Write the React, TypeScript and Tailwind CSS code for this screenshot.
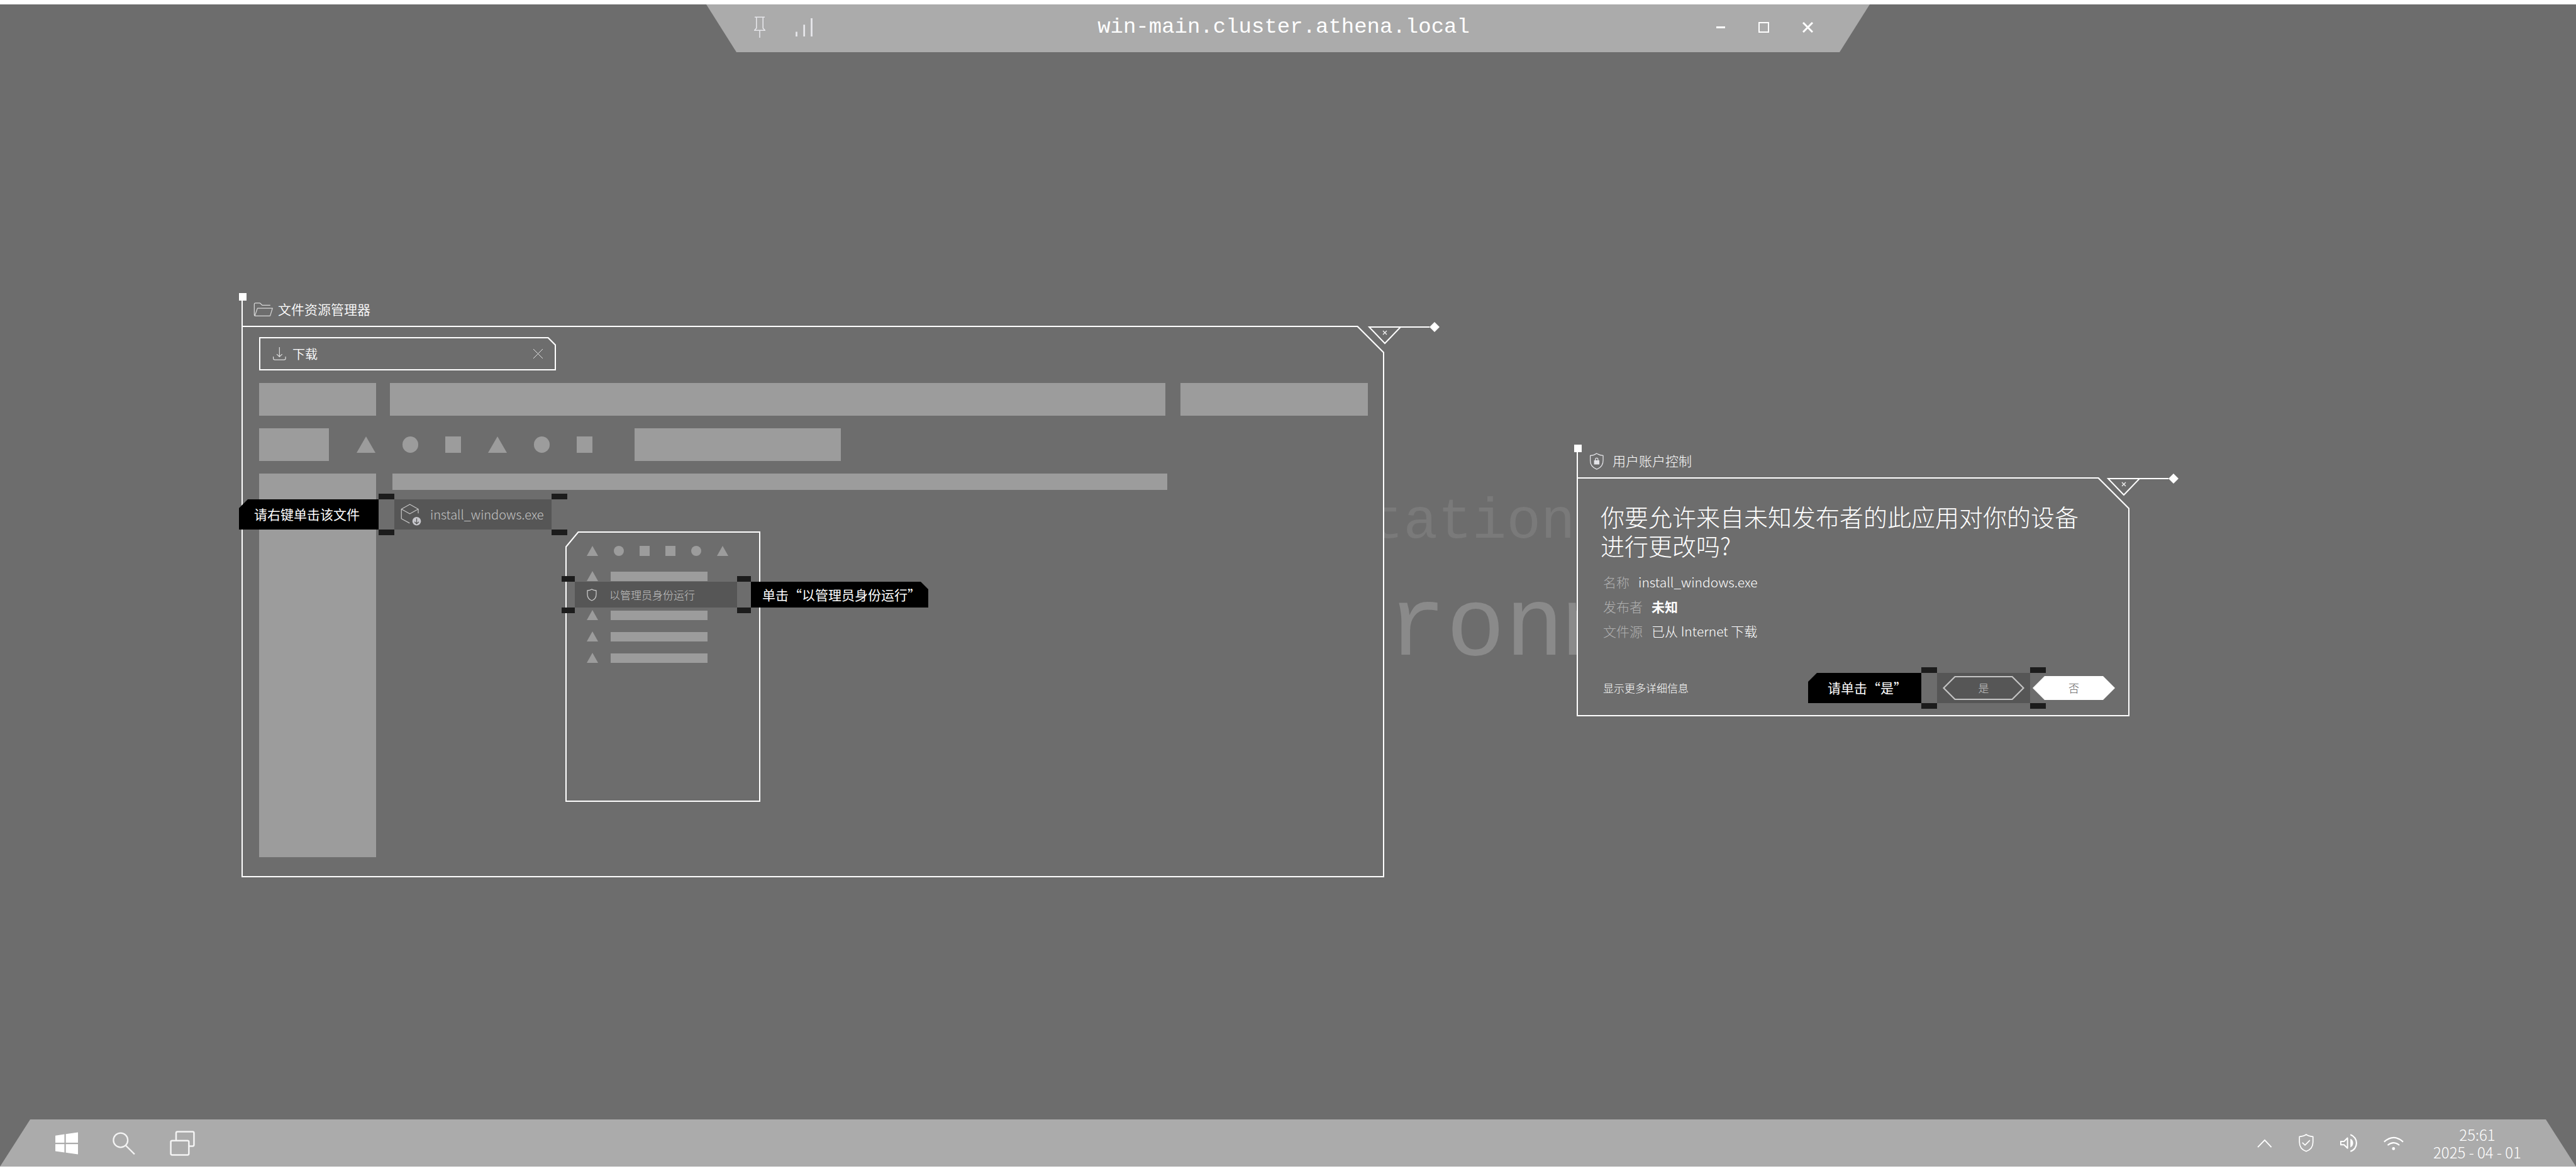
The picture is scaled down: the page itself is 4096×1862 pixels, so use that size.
import React from "react";

type IconProps = { className?: string };

const line = { fill: "none", stroke: "currentColor", strokeLinejoin: "round" as const };

const PinIcon = ({ className }: IconProps) => (
  <svg viewBox="54 88 57 107" className={className} aria-hidden="true" {...line} strokeWidth="5">
    <path d="M57 91.500H108M66 93V147L56 158H109L99 147V93M82.500 158V195" />
  </svg>
);

const SignalIcon = ({ className }: IconProps) => (
  <svg viewBox="271 99 86 93" className={className} aria-hidden="true" fill="currentColor">
    <path d="M271 168h9v24h-9zM310 132h9v60h-9zM348 99h9v93h-9z" />
  </svg>
);

const FolderIcon = ({ className }: IconProps) => (
  <svg viewBox="97 68 98 70" className={className} aria-hidden="true" {...line} strokeWidth="4">
    <path d="M182 82H141L131 72Q130 71 128 71H107Q101 71 101 77V130Q101 136 107 136H178Q181 136 182 133L193 97H117L104 134" />
  </svg>
);

const DownloadIcon = ({ className }: IconProps) => (
  <svg viewBox="198 291 70 70" className={className} aria-hidden="true" {...line} strokeWidth="4">
    <path d="M232.500 291V342M218 328L232.500 342L247 328M200 341V350Q200 358 208 358H257Q265 358 265 350V341" />
  </svg>
);

const CrossIcon = ({ className }: IconProps) => (
  <svg viewBox="0 0 17 17" className={className} aria-hidden="true" {...line}>
    <path d="M1 1L16 16M16 1L1 16" />
  </svg>
);

const PackageIcon = ({ className }: IconProps) => (
  <svg viewBox="853 1101 106 112" className={className} aria-hidden="true">
    <path
      d="M943 1150V1128L900 1104L857 1128V1177L899 1200M857 1128L900 1152L943 1128"
      {...line}
      strokeWidth="4"
    />
    <circle cx="935" cy="1190" r="22" fill="#c6c6cb" />
    <path d="M935 1176V1203M924 1193L935 1203L946 1193" fill="none" stroke="#565656" strokeWidth="4" />
  </svg>
);

const ShieldIcon = ({ className }: IconProps) => (
  <svg viewBox="0 0 16 20" className={className} aria-hidden="true" {...line} strokeWidth="1.300">
    <path d="M8 1C6 2.400 4 2.900 1 3V9C1 14 4 17.500 8 19C12 17.500 15 14 15 9V3C12 2.900 10 2.400 8 1Z" />
  </svg>
);

const ShieldLockIcon = ({ className }: IconProps) => (
  <svg viewBox="108 73 70 86" className={className} aria-hidden="true">
    <path
      d="M142.500 76C132 84 121 86 110 87V112C110 134 123 149 142.500 156C162 149 175 134 175 112V87C164 86 153 84 142.500 76Z"
      {...line}
      strokeWidth="4"
    />
    <path d="M136 112V106Q136 100 142.500 100Q149 100 149 106V112" fill="none" stroke="currentColor" strokeWidth="4" />
    <rect x="129" y="111" width="27" height="21" fill="currentColor" />
  </svg>
);

const ShieldCheckIcon = ({ className }: IconProps) => (
  <svg viewBox="269 108 78 94" className={className} aria-hidden="true" {...line} strokeWidth="5.500">
    <path d="M308 111C297 119 285 121 273 122V150C273 174 288 191 308 198C328 191 343 174 343 150V122C331 121 319 119 308 111Z" />
    <path d="M288 153L302 166L327 141" />
  </svg>
);

const SpeakerIcon = ({ className }: IconProps) => (
  <svg viewBox="480 109 88 94" className={className} aria-hidden="true">
    <path d="M483 148H500L518 130V183L500 165H483Z" {...line} strokeWidth="6.500" />
    <path d="M533 134Q547 140 547 156Q547 172 533 179Z" fill="currentColor" />
    <path d="M533 113C575 126 575 187 533 199" fill="none" stroke="currentColor" strokeWidth="7" />
  </svg>
);

const WifiIcon = ({ className }: IconProps) => (
  <svg viewBox="689 118 108 74" className={className} aria-hidden="true">
    <path d="M692 147Q743 101 794 147M711 165Q743 139 774 165" fill="none" stroke="currentColor" strokeWidth="7" />
    <circle cx="742.500" cy="183.500" r="8" fill="currentColor" />
  </svg>
);

const ChevronIcon = ({ className }: IconProps) => (
  <svg viewBox="53 129 78 46" className={className} aria-hidden="true" {...line} strokeWidth="6">
    <path d="M56 172L92 135L127 172" strokeLinejoin="miter" />
  </svg>
);

const WindowsIcon = ({ className }: IconProps) => (
  <svg viewBox="282 96 117 114" className={className} aria-hidden="true" fill="currentColor">
    <path d="M282 113L329 106V150H282ZM336 105L399 96V150H336ZM282 157H329V200L282 194ZM336 157H399V210L336 201Z" />
  </svg>
);

const SearchIcon = ({ className }: IconProps) => (
  <svg viewBox="578 97 116 117" className={className} aria-hidden="true" {...line} strokeWidth="7.500">
    <circle cx="619" cy="139" r="37" />
    <path d="M645 166L691 212" />
  </svg>
);

const TaskViewIcon = ({ className }: IconProps) => (
  <svg viewBox="872 92 128 128" className={className} aria-hidden="true" {...line} strokeWidth="8">
    <path d="M904 142V104Q904 97 911 97H988Q995 97 995 104V163Q995 170 988 170H970" />
    <rect x="877" y="142" width="92" height="73" rx="7" />
  </svg>
);

const CloseOrnament = () => (
  <svg viewBox="0 0 114 38" className="h-[38px] w-[114px]" aria-hidden="true">
    <path d="M2 9H52L27 35ZM52 9H98" fill="none" stroke="#fff" strokeWidth="2" />
    <path d="M98 9L106 1L114 9L106 17Z" fill="#fff" />
    <path d="M24 15L30 21M30 15L24 21" stroke="#f4f4f4" strokeWidth="1.300" fill="none" />
  </svg>
);

const shapeClass = "bg-[#9c9c9c]";
type Shape = "triangle" | "circle" | "square";

const ToolShape = ({ kind }: { kind: Shape }) =>
  kind === "triangle" ? (
    <span className="h-[26px] w-[30px] bg-[#9c9c9c] [clip-path:polygon(50%_0,100%_100%,0_100%)]" />
  ) : kind === "circle" ? (
    <span className="h-[26px] w-[25px] rounded-full bg-[#9c9c9c]" />
  ) : (
    <span className="h-[26px] w-[25px] bg-[#9c9c9c]" />
  );

const MenuShape = ({ kind }: { kind: Shape }) =>
  kind === "triangle" ? (
    <span className="h-4 w-[18px] bg-[#9c9c9c] [clip-path:polygon(50%_0,100%_100%,0_100%)]" />
  ) : kind === "circle" ? (
    <span className="size-4 rounded-full bg-[#9c9c9c]" />
  ) : (
    <span className="size-4 bg-[#9c9c9c]" />
  );

const MenuRow = () => (
  <div className="flex items-center gap-5">
    <MenuShape kind="triangle" />
    <span className="h-[15px] w-[154px] bg-[#9c9c9c]" />
  </div>
);

const Marks = ({ className }: { className: string }) => (
  <div className={`flex flex-col justify-between self-stretch ${className}`} aria-hidden="true">
    <span className="h-[9px] bg-[#1c1c1c]" />
    <span className="h-[9px] bg-[#1c1c1c]" />
  </div>
);

const WindowHeader = ({ children }: { children: React.ReactNode }) => (
  <header className="relative flex h-[52px] items-center border-l-2 border-white text-[21px]">
    <span className="absolute -left-[6px] top-0 size-3 bg-white" />
    {children}
  </header>
);

function Explorer() {
  const tools: Shape[] = ["triangle", "circle", "square", "triangle", "circle", "square"];
  const menuTools: Shape[] = ["triangle", "circle", "square", "square", "circle", "triangle"];
  return (
    <section className="absolute left-[384px] top-[383px] w-[1817px]" aria-label="文件资源管理器">
      <WindowHeader>
        <FolderIcon className="ml-[17px] h-[22px] w-[31px] text-[#d6d6d6]" />
        <h2 className="ml-2 font-[350]">文件资源管理器</h2>
      </WindowHeader>
      <div className="bg-white p-[2px] [clip-path:polygon(0_0,calc(100%-42px)_0,100%_42px,100%_100%,0_100%)]">
        <div className="flex flex-col gap-5 bg-[#6d6d6d] pb-[30px] pl-[26px] pr-6 pt-4 [clip-path:polygon(0_0,calc(100%-41px)_0,100%_41px,100%_100%,0_100%)]">
          <div className="w-[472px] bg-white p-[2px] [clip-path:polygon(0_0,calc(100%-12px)_0,100%_12px,100%_100%,0_100%)]">
            <div className="flex h-[49px] items-center bg-[#6d6d6d] px-[18px] [clip-path:polygon(0_0,calc(100%-11px)_0,100%_11px,100%_100%,0_100%)]">
              <DownloadIcon className="ml-[2px] size-[21px] text-[#dcdcdc]" />
              <span className="ml-[10px] text-xl font-[350]">下载</span>
              <button type="button" aria-label="关闭" className="ml-auto text-[#e0e0e0]">
                <CrossIcon className="size-[17px]" />
              </button>
            </div>
          </div>
          <div className="flex">
            <span className={`h-[52px] w-[186px] ${shapeClass}`} />
            <span className={`ml-[22px] mr-6 h-[52px] flex-1 ${shapeClass}`} />
            <span className={`h-[52px] w-[298px] ${shapeClass}`} />
          </div>
          <div className="flex items-center">
            <span className={`h-[52px] w-[111px] ${shapeClass}`} />
            <div className="ml-11 mr-[67px] flex gap-[43px]">
              {tools.map((kind, i) => (
                <ToolShape key={i} kind={kind} />
              ))}
            </div>
            <span className={`h-[52px] w-[328px] ${shapeClass}`} />
          </div>
          <div className="flex min-h-[610px] items-start">
            <span className={`w-[186px] self-stretch ${shapeClass}`} />
            <span className={`ml-[26px] mr-[319px] h-[26px] flex-1 ${shapeClass}`} />
          </div>
        </div>
      </div>
      <button type="button" aria-label="关闭窗口" className="absolute -right-[88px] top-[45px]">
        <CloseOrnament />
      </button>

      <div className="absolute -left-1 top-[319px] flex h-[66px] items-center">
        <div className="flex h-12 w-[222px] items-center bg-black pl-6 text-[21px] [clip-path:polygon(14px_0,100%_0,100%_100%,0_100%,0_14px)]">
          请右键单击该文件
        </div>
        <Marks className="w-[25px]" />
        <button
          type="button"
          className="flex h-12 w-[250px] items-center bg-[#565656] pl-[10px] text-xl font-light text-[#c4c4c4]"
        >
          <PackageIcon className="h-[35px] w-[33px]" />
          <span className="ml-[14px]">install_windows.exe</span>
        </button>
        <Marks className="w-[25px]" />
      </div>

      <div className="absolute left-[515px] top-[379px] w-[310px]" role="menu">
        <div className="bg-white p-[2px] [clip-path:polygon(20px_0,100%_0,100%_100%,0_100%,0_24px)]">
          <div className="flex min-h-[426px] flex-col bg-[#6d6d6d] pl-8 pt-[21px] [clip-path:polygon(19px_0,100%_0,100%_100%,0_100%,0_23px)]">
            <div className="flex gap-[25px]">
              {menuTools.map((kind, i) => (
                <MenuShape key={i} kind={kind} />
              ))}
            </div>
            <div className="mt-6">
              <MenuRow />
            </div>
            <div className="mt-[46px] flex flex-col gap-[18px]">
              <MenuRow />
              <MenuRow />
              <MenuRow />
            </div>
          </div>
        </div>
        <div className="absolute -left-[6px] top-[71px] flex h-[59px] items-center">
          <Marks className="w-[21px]" />
          <button
            type="button"
            role="menuitem"
            className="flex h-[41px] w-[258px] items-center bg-[#565656] pl-[19px] text-[17px] font-light text-[#c4c4c4]"
          >
            <ShieldIcon className="h-5 w-4 text-[#c8c8c8]" />
            <span className="ml-5">以管理员身份运行</span>
          </button>
          <Marks className="w-[22px]" />
          <div className="flex h-[41px] w-[282px] items-center whitespace-nowrap bg-black pl-[18px] text-[21px] [clip-path:polygon(0_0,calc(100%-12px)_0,100%_12px,100%_100%,0_100%)]">
            单击“以管理员身份运行”
          </div>
        </div>
      </div>
    </section>
  );
}

function AccountControl() {
  return (
    <section className="absolute left-[2507px] top-[624px] w-[879px]" aria-label="用户账户控制">
      <WindowHeader>
        <ShieldLockIcon className="ml-[19px] h-[27px] w-[22px] text-[#e4e4e8]" />
        <h2 className="ml-[14px] font-light">用户账户控制</h2>
      </WindowHeader>
      <div className="bg-white p-[2px] [clip-path:polygon(0_0,calc(100%-49px)_0,100%_49px,100%_100%,0_100%)]">
        <div className="bg-[#6d6d6d] pb-[10px] pl-9 pr-[21px] pt-[37px] [clip-path:polygon(0_0,calc(100%-48px)_0,100%_48px,100%_100%,0_100%)]">
          <h1 className="max-w-[780px] text-[38px] font-light leading-[46px]">
            你要允许来自未知发布者的此应用对你的设备进行更改吗?
          </h1>
          <dl className="ml-1 mt-4 text-[21px] font-light leading-[39px]">
            <div className="flex gap-[14px]">
              <dt className="text-[#b0b0b0]">名称</dt>
              <dd>install_windows.exe</dd>
            </div>
            <div className="flex gap-[14px]">
              <dt className="text-[#b0b0b0]">发布者</dt>
              <dd className="font-bold">未知</dd>
            </div>
            <div className="flex gap-[14px]">
              <dt className="text-[#b0b0b0]">文件源</dt>
              <dd>已从 Internet 下载</dd>
            </div>
          </dl>
          <div className="ml-1 mt-[38px] flex items-center">
            <a href="#details" className="text-[17px] font-light">
              显示更多详细信息
            </a>
            <div className="ml-auto flex h-[66px] items-center">
              <div className="flex h-12 w-[180px] items-center bg-black pl-[31px] text-[21px] [clip-path:polygon(14px_0,100%_0,100%_100%,0_100%,0_14px)]">
                请单击“是”
              </div>
              <Marks className="w-[25px]" />
              <div className="flex h-12 w-[148px] items-center justify-center bg-[#565656]">
                <button
                  type="button"
                  className="w-[130px] bg-[#c6c6c6] p-[2px] text-[17px] font-light text-[#c4c4c4] [clip-path:polygon(0_50%,19px_0,calc(100%-19px)_0,100%_50%,calc(100%-19px)_100%,19px_100%)]"
                >
                  <span className="flex h-[34px] items-center justify-center bg-[#565656] [clip-path:polygon(1px_50%,18px_0,calc(100%-18px)_0,calc(100%-1px)_50%,calc(100%-18px)_100%,18px_100%)]">
                    是
                  </span>
                </button>
              </div>
              <Marks className="w-[25px]" />
            </div>
            <button
              type="button"
              className="-ml-[21px] flex h-[38px] w-[131px] items-center justify-center bg-white text-[17px] font-light text-[#5c5c5c] [clip-path:polygon(0_50%,19px_0,calc(100%-19px)_0,100%_50%,calc(100%-19px)_100%,19px_100%)]"
            >
              否
            </button>
          </div>
        </div>
      </div>
      <button type="button" aria-label="关闭对话框" className="absolute -right-[78px] top-[45px]">
        <CloseOrnament />
      </button>
    </section>
  );
}

export default function App() {
  return (
    <div
      lang="zh-CN"
      className="flex min-h-screen flex-col bg-white py-[7px] font-['Noto_Sans_CJK_SC',sans-serif] text-white"
    >
      <div className="flex flex-1 flex-col overflow-hidden bg-[#6d6d6d]">
        <header className="mx-auto grid h-[76px] w-[1850px] grid-cols-[1fr_auto_1fr] items-center bg-[#ababab] pb-1 pl-[76px] pr-[90px] [clip-path:polygon(0_0,100%_0,calc(100%-48px)_100%,48px_100%)]">
          <div className="flex items-center gap-12 text-[#e6e6ea]">
            <button type="button" aria-label="固定">
              <PinIcon className="h-[34px] w-[18px]" />
            </button>
            <SignalIcon className="h-[29px] w-[27px]" />
          </div>
          <span className="font-['Liberation_Mono',monospace] text-[34px] leading-10">
            win-main.cluster.athena.local
          </span>
          <div className="flex items-center justify-end gap-[53px]">
            <button type="button" aria-label="最小化" className="h-[3px] w-[14px] bg-white" />
            <button type="button" aria-label="最大化" className="size-[17px] border-2 border-white" />
            <button type="button" aria-label="关闭" className="[&_path]:stroke-[3]">
              <CrossIcon className="size-[17px]" />
            </button>
          </div>
        </header>

        <main className="relative flex-1">
          <p
            aria-hidden="true"
            className="absolute left-[2177px] top-[698px] font-['Liberation_Mono',monospace] text-[91px] leading-[100px] text-[#7a7a7a]"
          >
            tation
          </p>
          <p
            aria-hidden="true"
            className="absolute left-[2206px] top-[837px] w-[302px] overflow-hidden font-['Liberation_Mono',monospace] text-[156px] leading-[160px] text-[#8a8a8a]"
          >
            ronm
          </p>
          <Explorer />
          <AccountControl />
        </main>

        <footer className="flex h-[75px] items-center bg-[#ababab] pl-[88px] pr-[82px] [clip-path:polygon(48px_0,calc(100%-48px)_0,100%_100%,0_100%)]">
          <nav className="flex items-center gap-[55px]">
            <button type="button" aria-label="开始">
              <WindowsIcon className="size-9" />
            </button>
            <button type="button" aria-label="搜索" className="text-[#f4f4f4]">
              <SearchIcon className="size-9" />
            </button>
            <button type="button" aria-label="任务视图" className="text-[#f4f4f4]">
              <TaskViewIcon className="size-10" />
            </button>
          </nav>
          <div className="ml-auto flex items-center gap-[42px]">
            <button type="button" aria-label="显示隐藏的图标">
              <ChevronIcon className="h-[14px] w-6" />
            </button>
            <ShieldCheckIcon className="h-[29px] w-6" />
            <SpeakerIcon className="h-[29px] w-[27px]" />
            <WifiIcon className="h-[22px] w-8" />
            <div className="min-w-[150px] text-center text-2xl font-light leading-7">
              <div className="leading-7">25:61</div>
              <div className="leading-7">2025 - 04 - 01</div>
            </div>
          </div>
        </footer>
      </div>
    </div>
  );
}
